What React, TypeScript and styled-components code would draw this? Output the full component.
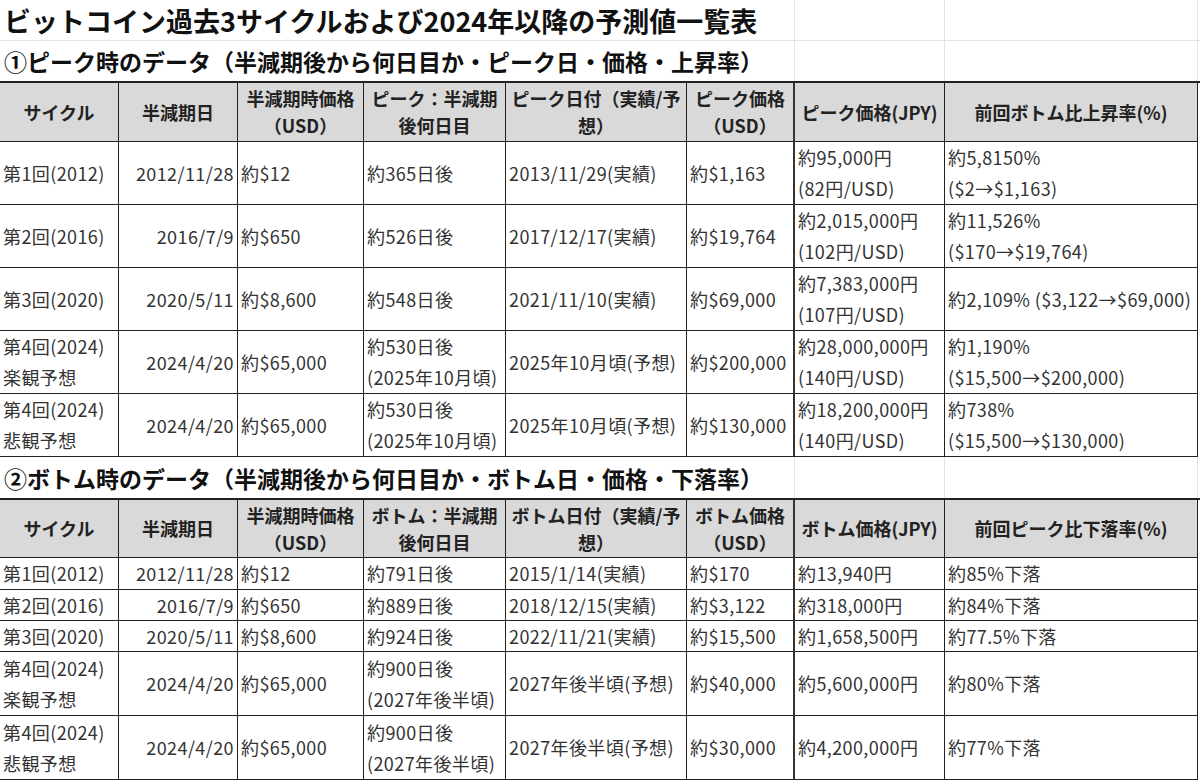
import React from 'react'
import styled, { createGlobalStyle } from 'styled-components'

const COLS = '119px 119px 126px 142px 181px 108px 150px 253px'

const GlobalStyle = createGlobalStyle`
  body {
    margin: 0;
    background: #fff;
    font-family: "Noto Sans CJK JP", "Noto Sans", sans-serif;
    color: #333;
  }
`

const Sheet = styled.div`
  width: 1200px;
  display: flex;
  flex-direction: column;
`

const TitleRow = styled.div<{ $h: number; $line?: boolean }>`
  display: grid;
  grid-template-columns: ${COLS};
  height: ${(p) => p.$h}px;
  box-sizing: border-box;
  border-bottom: ${(p) => (p.$line ? '1px solid #e2e2e2' : 'none')};
`

const TitleText = styled.div<{ $size: number }>`
  grid-column: 1 / 7;
  display: flex;
  align-items: center;
  padding-left: 4px;
  font-size: ${(p) => p.$size}px;
  font-weight: 700;
  color: #111;
  white-space: nowrap;
  border-right: 1px solid #e2e2e2;
`

const Blank = styled.div`
  border-right: 1px solid #e2e2e2;
`

const Table = styled.div<{ $rows: string }>`
  display: grid;
  grid-template-columns: ${COLS};
  grid-template-rows: ${(p) => p.$rows};
  border-top: 2px solid #222;
`

const HeadCell = styled.div<{ $thick?: boolean }>`
  box-sizing: border-box;
  display: flex;
  flex-direction: column;
  justify-content: center;
  text-align: center;
  background: #d9d9d9;
  font-size: 18px;
  font-weight: 700;
  line-height: 27px;
  color: #222;
  white-space: pre;
  border-bottom: 1px solid #222;
  border-right: ${(p) => (p.$thick ? '2px solid #333' : '1px solid #222')};
`

const Cell = styled.div<{ $right?: boolean; $thick?: boolean }>`
  box-sizing: border-box;
  display: flex;
  flex-direction: column;
  justify-content: center;
  text-align: ${(p) => (p.$right ? 'right' : 'left')};
  padding: ${(p) => (p.$right ? '0 3px 0 0' : '0 0 0 3px')};
  font-size: 18px;
  line-height: 31px;
  letter-spacing: 0.4px;
  color: #333;
  white-space: pre;
  border-bottom: 1px solid #222;
  border-right: ${(p) => (p.$thick ? '2px solid #333' : '1px solid #222')};
`

const peakHead = [
  'サイクル',
  '半減期日',
  '半減期時価格\n（USD）',
  'ピーク：半減期\n後何日目',
  'ピーク日付（実績/予\n想）',
  'ピーク価格\n（USD）',
  'ピーク価格(JPY)',
  '前回ボトム比上昇率(%)',
]

const peakRows = [
  ['第1回(2012)', '2012/11/28', '約$12', '約365日後', '2013/11/29(実績)', '約$1,163', '約95,000円\n(82円/USD)', '約5,8150%\n($2→$1,163)'],
  ['第2回(2016)', '2016/7/9', '約$650', '約526日後', '2017/12/17(実績)', '約$19,764', '約2,015,000円\n(102円/USD)', '約11,526%\n($170→$19,764)'],
  ['第3回(2020)', '2020/5/11', '約$8,600', '約548日後', '2021/11/10(実績)', '約$69,000', '約7,383,000円\n(107円/USD)', '約2,109% ($3,122→$69,000)'],
  ['第4回(2024)\n楽観予想', '2024/4/20', '約$65,000', '約530日後\n(2025年10月頃)', '2025年10月頃(予想)', '約$200,000', '約28,000,000円\n(140円/USD)', '約1,190%\n($15,500→$200,000)'],
  ['第4回(2024)\n悲観予想', '2024/4/20', '約$65,000', '約530日後\n(2025年10月頃)', '2025年10月頃(予想)', '約$130,000', '約18,200,000円\n(140円/USD)', '約738%\n($15,500→$130,000)'],
]

const bottomHead = [
  'サイクル',
  '半減期日',
  '半減期時価格\n（USD）',
  'ボトム：半減期\n後何日目',
  'ボトム日付（実績/予\n想）',
  'ボトム価格\n（USD）',
  'ボトム価格(JPY)',
  '前回ピーク比下落率(%)',
]

const bottomRows = [
  ['第1回(2012)', '2012/11/28', '約$12', '約791日後', '2015/1/14(実績)', '約$170', '約13,940円', '約85%下落'],
  ['第2回(2016)', '2016/7/9', '約$650', '約889日後', '2018/12/15(実績)', '約$3,122', '約318,000円', '約84%下落'],
  ['第3回(2020)', '2020/5/11', '約$8,600', '約924日後', '2022/11/21(実績)', '約$15,500', '約1,658,500円', '約77.5%下落'],
  ['第4回(2024)\n楽観予想', '2024/4/20', '約$65,000', '約900日後\n(2027年後半頃)', '2027年後半頃(予想)', '約$40,000', '約5,600,000円', '約80%下落'],
  ['第4回(2024)\n悲観予想', '2024/4/20', '約$65,000', '約900日後\n(2027年後半頃)', '2027年後半頃(予想)', '約$30,000', '約4,200,000円', '約77%下落'],
]

const DataTable: React.FC<{ head: string[]; rows: string[][]; heights: string }> = ({
  head,
  rows,
  heights,
}) => (
  <Table $rows={heights}>
    {head.map((h, i) => (
      <HeadCell key={i} $thick={i === 5}>
        {h}
      </HeadCell>
    ))}
    {rows.map((r, ri) =>
      r.map((c, ci) => (
        <Cell key={`${ri}-${ci}`} $right={ci === 1} $thick={ci === 5}>
          {c}
        </Cell>
      )),
    )}
  </Table>
)

export default function App() {
  return (
    <>
      <GlobalStyle />
      <Sheet>
        <TitleRow $h={41} $line>
          <TitleText $size={27}>ビットコイン過去3サイクルおよび2024年以降の予測値一覧表</TitleText>
          <Blank />
          <Blank />
        </TitleRow>
        <TitleRow $h={40}>
          <TitleText $size={23}>①ピーク時のデータ（半減期後から何日目か・ピーク日・価格・上昇率）</TitleText>
          <Blank />
          <Blank />
        </TitleRow>
        <DataTable head={peakHead} rows={peakRows} heights="59px repeat(5, 63px)" />
        <TitleRow $h={41}>
          <TitleText $size={23}>②ボトム時のデータ（半減期後から何日目か・ボトム日・価格・下落率）</TitleText>
          <Blank />
          <Blank />
        </TitleRow>
        <DataTable head={bottomHead} rows={bottomRows} heights="58px 32px 31px 31px 64px 64px" />
      </Sheet>
    </>
  )
}
